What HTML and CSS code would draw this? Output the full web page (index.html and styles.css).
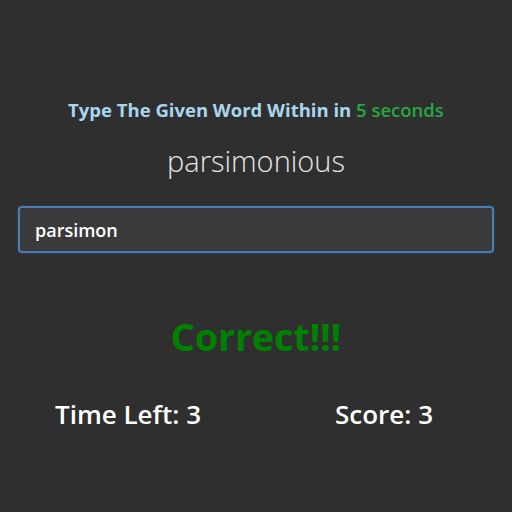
FILE: index.html
```html
<!DOCTYPE html>
<html>
<head>
<meta charset="utf-8">
<link rel="stylesheet" href="styles.css">
</head>
<body>
<main class="game">
  <h1 class="prompt">Type The Given Word Within in <span class="secs">5 seconds</span></h1>
  <p class="word">parsimonious</p>
  <div class="field"><input class="entry" type="text" value="parsimon"></div>
  <p class="result">Correct!!!</p>
  <div class="stats">
    <div class="stat">Time Left: 3</div>
    <div class="stat">Score: 3</div>
  </div>
</main>
</body>
</html>
```
FILE: styles.css
```css
html, body {
  margin: 0;
  padding: 0;
  background: #2f2f2f;
  height: 100%;
}
body {
  font-family: "Open Sans", "Noto Sans", sans-serif;
  color: #ffffff;
}
.game {
  display: flex;
  flex-direction: column;
  align-items: stretch;
  padding-top: 98px;
}
.prompt {
  margin: 0;
  text-align: center;
  font-size: 18.5px;
  font-weight: 700;
  line-height: 24px;
  color: #a9d6ef;
  letter-spacing: 0;
}
.secs {
  color: #28a745;
  font-weight: 600;
}
.word {
  margin: 22px 0 0;
  text-align: center;
  font-size: 29px;
  font-weight: 300;
  line-height: 34px;
  color: #e6e6e6;
}
.field {
  padding: 0 18px;
  margin-top: 28px;
}
.entry {
  display: block;
  box-sizing: border-box;
  width: 100%;
  height: 47px;
  background: #3a3a3a;
  border: 2px solid #4a7db4;
  border-radius: 4px;
  box-shadow: 0 0 2px rgba(74, 125, 180, 0.6);
  padding: 0 15px;
  font-family: "Open Sans", "Noto Sans", sans-serif;
  font-size: 18px;
  font-weight: 600;
  color: #ffffff;
  outline: none;
}
.result {
  margin: 60px 0 0;
  text-align: center;
  font-size: 38px;
  font-weight: 700;
  line-height: 46px;
  color: #008000;
  letter-spacing: -0.3px;
}
.stats {
  display: grid;
  grid-template-columns: 1fr 1fr;
  margin-top: 38px;
}
.stat {
  text-align: center;
  font-size: 26px;
  font-weight: 600;
  line-height: 34px;
}
```
